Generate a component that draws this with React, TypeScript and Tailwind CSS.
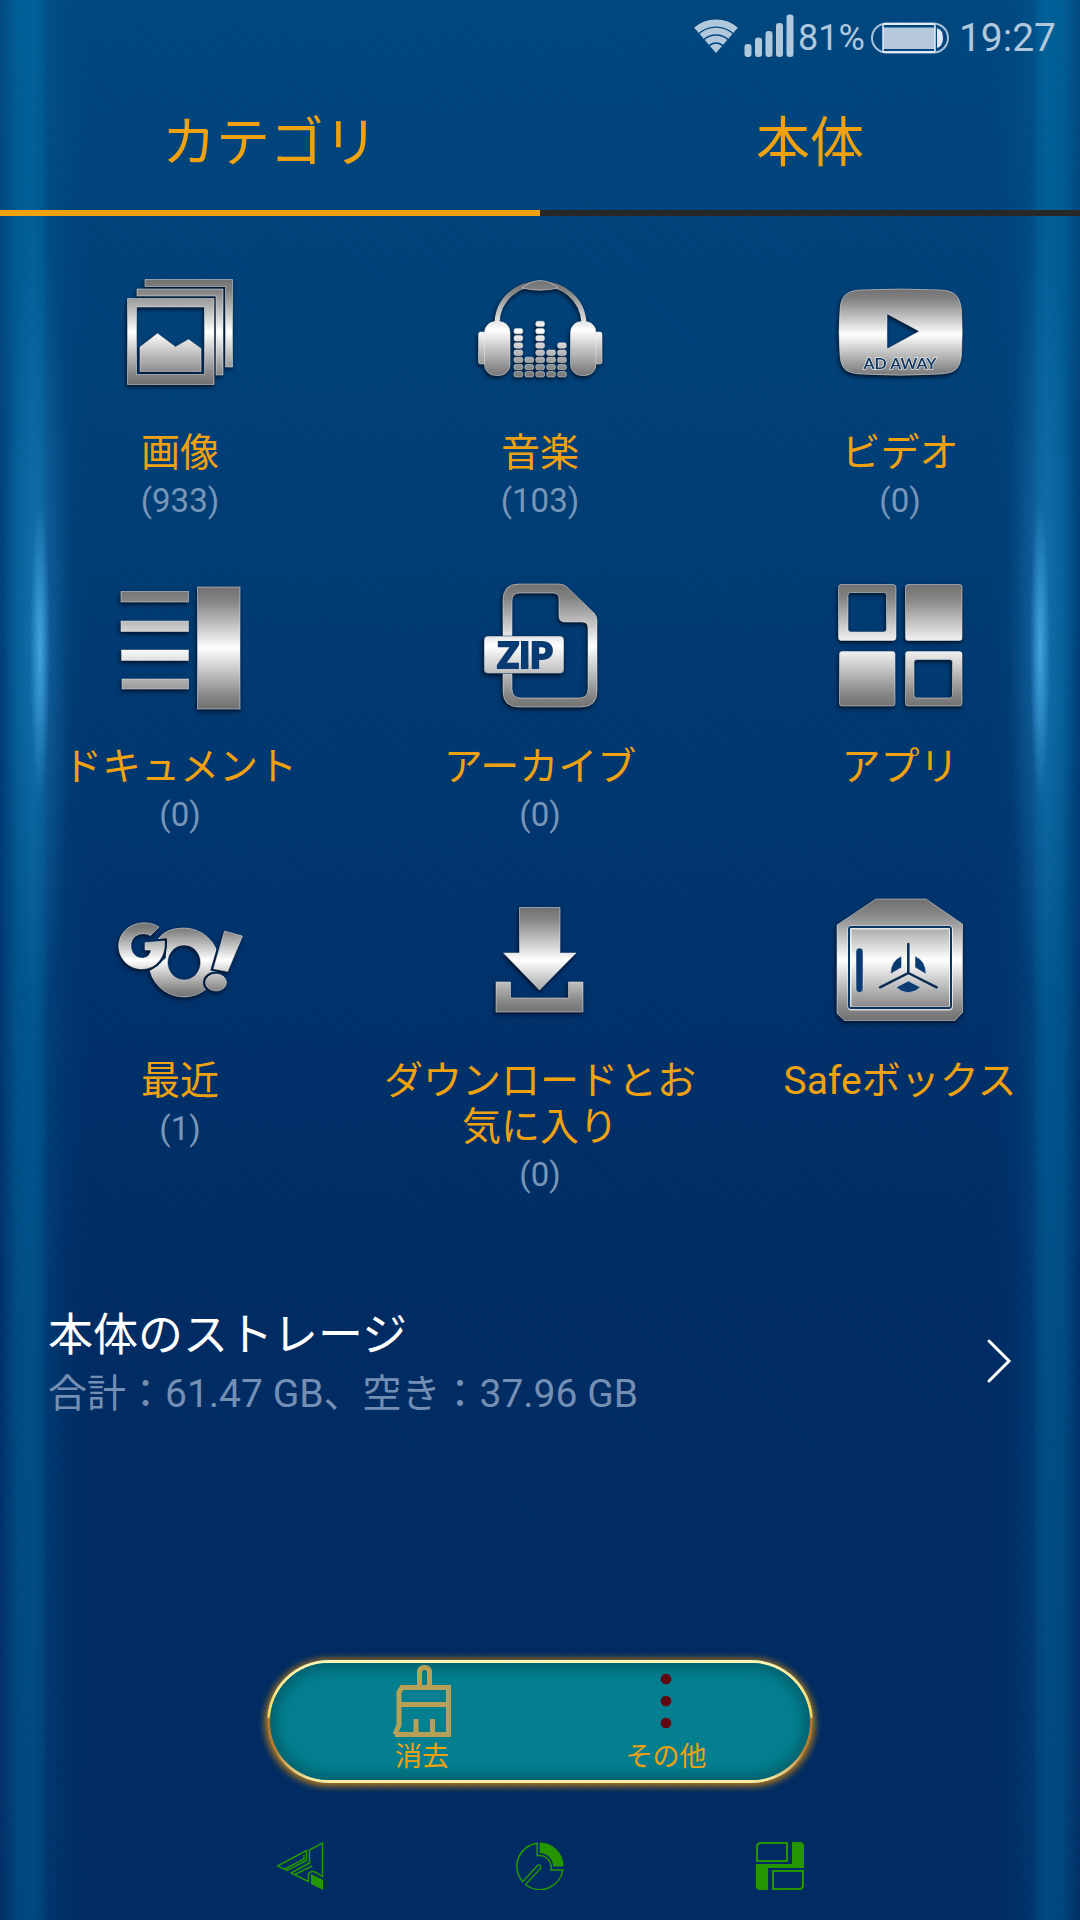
import { useState } from "react";
import type { ReactNode } from "react";

// Brushed metal icon, shaded grey -> white -> grey from top to bottom
const MetalIcon = ({ id, top, bottom, children }: { id: string; top: number; bottom: number; children: ReactNode }) => (
  <svg
    viewBox="0 0 144 144"
    aria-hidden="true"
    className="h-36 w-36 drop-shadow-[-1px_2px_2px_rgba(0,8,24,0.85)]"
    fill={`url(#${id})`}
    stroke="#ececec"
    strokeOpacity="0.5"
    strokeWidth="1"
  >
    <defs>
      <linearGradient id={id} gradientUnits="userSpaceOnUse" x1="0" x2="0" y1={top} y2={bottom}>
        <stop offset="0" stopColor="#707070" />
        <stop offset="0.12" stopColor="#858585" />
        <stop offset="0.5" stopColor="#ffffff" />
        <stop offset="0.9" stopColor="#858585" />
        <stop offset="1" stopColor="#707070" />
      </linearGradient>
    </defs>
    {children}
  </svg>
);

const ImagesIcon = () => (
  <MetalIcon id="metal-images" top={19} bottom={125}>
    <path d="M37 19.5H124.5V107H117.5V26.5H37z" />
    <path d="M29 29H115V115H108V36H29z" />
    <path fillRule="evenodd" d="M19.5 38.5H106V124.5H19.5zM28.5 47V114.5H96.5V47z" />
    <path d="M32 87L49.5 73.5L67.5 87L80.5 79.5L93 88.5V111.5H32z" />
  </MetalIcon>
);

const equalizer = [7, 3, 8, 4, 5];

const MusicIcon = () => (
  <MetalIcon id="metal-music" top={20} bottom={120}>
    <path d="M29 63C30 38 50 23.5 72 23.5S114.5 38 116 63" fill="none" stroke="url(#metal-music)" strokeOpacity="1" strokeWidth="5" />
    <path d="M54 28Q63 20.5 72.3 20.5T90 28Q72 32.5 54 28z" />
    <rect x="10.5" y="72" width="7" height="32" rx="2" />
    <rect x="127" y="72" width="7" height="32" rx="2" />
    <rect x="16.5" y="61.5" width="25.5" height="54" rx="11" />
    <rect x="102.5" y="61.5" width="25.5" height="54" rx="11" />
    {equalizer.map((count, col) =>
      Array.from({ length: count }, (_, row) => (
        <rect key={`${col}-${row}`} x={46 + col * 10.9} y={111.6 - row * 7.2} width="8.7" height="5.4" rx="2" />
      ))
    )}
  </MetalIcon>
);

const VideoIcon = () => (
  <MetalIcon id="metal-video" top={29} bottom={120}>
    <path
      fillRule="evenodd"
      d="M12 50C13 36 18 31 32 30Q72 28 113 30C127 31 132 36 133.5 50Q135 72 133.5 95C132 109 127 113 113 114Q72 116.5 32 114C18 113 13 109 12 95Q10 72 12 50zM59 53.7V89L91.3 71.3z"
    />
    <text
      x="72"
      y="109"
      textAnchor="middle"
      fill="#0b3563"
      stroke="#f4f4f4"
      strokeOpacity="0.8"
      strokeWidth="1.5"
      paintOrder="stroke"
      className="font-['Lato',sans-serif] text-[16px] font-semibold"
    >
      AD AWAY
    </text>
  </MetalIcon>
);

const DocumentIcon = () => (
  <MetalIcon id="metal-doc" top={13} bottom={135}>
    <rect x="13" y="17.5" width="67.5" height="10.5" />
    <rect x="13" y="47" width="67.5" height="10.5" />
    <rect x="13.5" y="76" width="67" height="10.5" />
    <rect x="14" y="105" width="66.5" height="10" />
    <rect x="89.5" y="13" width="42.5" height="122" />
  </MetalIcon>
);

const ArchiveIcon = () => (
  <MetalIcon id="metal-zip" top={10} bottom={134}>
    <path
      fillRule="evenodd"
      d="M51 10H90Q96 10 99 13L126 39Q129 42 129 47V117Q129 133 113 133H51Q35 133 35 117V26Q35 10 51 10zM52 19Q44 19 44 27V115Q44 124 53 124H111Q120 124 120 115V54Q120 48 114 48H97Q91 48 91 42V25Q91 19 85 19z"
    />
    <rect x="16" y="62" width="80" height="37.5" rx="4" stroke="#0b3563" strokeOpacity="0.5" />
    <text
      x="57"
      y="94"
      textAnchor="middle"
      fill="#083a73"
      stroke="#083a73"
      strokeOpacity="1"
      strokeWidth="2"
      className="font-['Lato',sans-serif] text-[36px] font-black"
    >
      ZIP
    </text>
  </MetalIcon>
);

const AppsIcon = () => (
  <MetalIcon id="metal-apps" top={10} bottom={133}>
    <path
      fillRule="evenodd"
      d="M13 10.5H65Q68 10.5 68 13.5V63.5Q68 66.5 65 66.5H13Q10.5 66.5 10.5 63.5V13.5Q10.5 10.5 13 10.5zM23 18.5Q20 18.5 20 21.5V55Q20 58 23 58H55.5Q58.5 58 58.5 55V21.5Q58.5 18.5 55.5 18.5z"
    />
    <rect x="77.5" y="10.5" width="56.5" height="56" rx="2.5" />
    <rect x="11.5" y="77.5" width="55.5" height="54.5" rx="2.5" />
    <path
      fillRule="evenodd"
      d="M80 77.5H131.5Q134 77.5 134 80V129.5Q134 132 131.5 132H80Q77.5 132 77.5 129.5V80Q77.5 77.5 80 77.5zM89 85.5Q86 85.5 86 88.5V121Q86 124 89 124H121.5Q124.5 124 124.5 121V88.5Q124.5 85.5 121.5 85.5z"
    />
  </MetalIcon>
);

const letterG =
  "M51 39C45 35 38 34.5 33 35C19 36.5 10.5 47 10.7 58.5C11 71 21 81 34 81C49 80.5 57.5 69 56.5 53L37 54.7V62H43C42 68 38 70.5 33 70C26 69 22.5 63 23 56C24 47 34 43 42.5 47.5z";
const exclamation = "M116.5 43L134.5 48L119.7 83.5L105.5 80.7z";

const RecentIcon = () => (
  <MetalIcon id="metal-go" top={34} bottom={110}>
    <mask id="go-gap" maskUnits="userSpaceOnUse" x="0" y="0" width="144" height="144">
      <rect width="144" height="144" fill="#ffffff" />
      <g fill="#000000" stroke="#000000" strokeOpacity="1" strokeWidth="5">
        <path d={letterG} />
        <path d={exclamation} />
        <ellipse cx="108" cy="94.5" rx="10.5" ry="8.5" />
      </g>
    </mask>
    <path
      mask="url(#go-gap)"
      fillRule="evenodd"
      d="M50 51Q58 40 75.5 40A35 34.5 0 1 1 42 83L58 70L58 52zM76 57A16.5 17.5 0 1 0 76.1 57z"
    />
    <path d={letterG} />
    <path d={exclamation} />
    <ellipse cx="108" cy="94.5" rx="10.5" ry="8.5" />
  </MetalIcon>
);

const DownloadIcon = () => (
  <MetalIcon id="metal-download" top={19} bottom={125}>
    <path d="M51.5 19.5H92V65H108L71.5 102L35.5 65H51.5z" />
    <path d="M28 94H42.5V110H100.5V94H115V124H28z" />
  </MetalIcon>
);

const SafeIcon = () => (
  <MetalIcon id="metal-safe" top={11} bottom={133}>
    <path d="M48 11H98L134.5 36V124.5L127 132.5H16.5L9 125.5V37z" />
    <rect x="21.5" y="39.5" width="101.5" height="81" rx="2" fill="none" stroke="#ffffff" strokeOpacity="0.7" strokeWidth="4" />
    <rect x="21" y="39" width="102" height="81" rx="2" fill="none" stroke="#0b3563" strokeOpacity="1" strokeWidth="2" />
    <g fill="#0a3a72">
      <rect x="28" y="60" width="7" height="44.5" rx="3.5" />
      <path d="M62.5 86Q62.5 73 73.5 68V79.5z" />
      <path d="M98 86Q98 73 87 68V79.5z" />
      <path d="M68 99.3L80.3 93L92.5 99.3Q80.3 110 68 99.3z" />
    </g>
    <path
      d="M80.3 56V85L52 99.3M80.3 85L108.7 99.3"
      fill="none"
      stroke="#0b2c52"
      strokeOpacity="1"
      strokeWidth="2.5"
      strokeLinecap="round"
    />
  </MetalIcon>
);

const categories = [
  { label: "画像", count: 933, icon: <ImagesIcon /> },
  { label: "音楽", count: 103, icon: <MusicIcon /> },
  { label: "ビデオ", count: 0, icon: <VideoIcon /> },
  { label: "ドキュメント", count: 0, icon: <DocumentIcon /> },
  { label: "アーカイブ", count: 0, icon: <ArchiveIcon /> },
  { label: "アプリ", icon: <AppsIcon /> },
  { label: "最近", count: 1, icon: <RecentIcon /> },
  { label: "ダウンロードとお気に入り", count: 0, icon: <DownloadIcon /> },
  { label: "Safeボックス", icon: <SafeIcon /> },
];

const StatusBar = () => (
  <div className="flex h-[72px] items-center justify-end pr-6 text-[#b1c7dc]">
    <svg viewBox="0 0 44 34" className="h-[34px] w-11" aria-hidden="true">
      <clipPath id="wifi-fan">
        <path d="M22 34L-4 4V-4H48V4z" />
      </clipPath>
      <g clipPath="url(#wifi-fan)" fill="none" stroke="currentColor">
        <circle cx="22" cy="34" r="30" strokeWidth="7" />
        <circle cx="22" cy="34" r="22" strokeWidth="6.3" />
        <circle cx="22" cy="34" r="14" strokeWidth="6.6" />
        <circle cx="22" cy="34" r="4.7" strokeWidth="9.2" />
      </g>
    </svg>
    <svg viewBox="0 0 50 44" className="ml-1.5 h-11 w-[50px]" fill="currentColor" aria-hidden="true">
      <rect x="0.5" y="30" width="7" height="13" rx="3" />
      <rect x="11" y="23.5" width="7" height="19.5" rx="3" />
      <rect x="21.5" y="17" width="7" height="26" rx="3" />
      <rect x="32" y="9" width="7" height="34" rx="3" />
      <rect x="42.5" y="0.5" width="7" height="42.5" rx="3" />
    </svg>
    <span className="ml-1 pt-1 text-[36px] leading-none">81%</span>
    <svg viewBox="0 0 78 32" className="mt-1 ml-1.5 h-8 w-[78px]" aria-hidden="true">
      <rect x="1" y="1.5" width="76" height="29" rx="14.5" fill="none" stroke="#a9c1d9" strokeWidth="2" />
      <path d="M12 2H62M12 30H62" stroke="#dfe9f3" strokeWidth="2" />
      <rect x="12" y="5.5" width="52" height="21.5" fill="#b5c8dc" />
      <rect x="12" y="2" width="52" height="28" rx="2" fill="none" stroke="#e3ecf5" strokeWidth="1.5" />
      <path d="M66 6Q72 8 72 16T66 26z" fill="#dfe8f2" />
    </svg>
    <span className="ml-2.5 pt-1 text-[39px] leading-none">19:27</span>
  </div>
);

const tabs = ["カテゴリ", "本体"];

const Tabs = () => {
  const [active, setActive] = useState(0);
  return (
    <div role="tablist" className="grid grid-cols-2">
      {tabs.map((tab, index) => (
        <button
          key={tab}
          type="button"
          role="tab"
          aria-selected={active === index}
          onClick={() => setActive(index)}
          className={`h-36 border-b-6 pt-1.5 text-[54px] leading-none text-[#f0a10f] ${active === index ? "border-[#f0a10f]" : "border-[#282828]"}`}
        >
          {tab}
        </button>
      ))}
    </div>
  );
};

const ActionBar = () => (
  <div className="mx-auto w-[546px] rounded-full bg-[linear-gradient(#fff6b8_0%,#f3d35c_46%,#a8752a_48%,#b98232_75%,#fff0a6_100%)] p-[3px] shadow-[0_1px_7px_2px_#b87a14]">
    <div className="grid h-[117px] grid-cols-2 rounded-full bg-[#037f90] pr-[22px] pl-[30px] shadow-[inset_0_0_12px_7px_#02636f]">
      <button type="button" className="flex flex-col items-center text-[27px] leading-[34px] text-[#f0a10f]">
        <svg viewBox="0 0 72 77" className="h-[77px] w-[72px]" fill="none" stroke="#b9a057" strokeWidth="5" aria-hidden="true">
          <path d="M9 71.5L13 62V29L16 24.5H62.5V71.5H9M13 41.5H62" />
          <path d="M33.5 27V10Q33.5 4.5 38.5 4.5T43.5 10V27M30 72V56M46.5 72V56" />
        </svg>
        消去
      </button>
      <button type="button" className="flex flex-col items-center text-[27px] leading-[34px] text-[#f0a10f]">
        <svg viewBox="0 0 72 77" className="h-[77px] w-[72px]" fill="#620710" aria-hidden="true">
          <circle cx="36" cy="16" r="5.3" />
          <circle cx="36" cy="38" r="5.3" />
          <circle cx="36" cy="60" r="5.3" />
        </svg>
        その他
      </button>
    </div>
  </div>
);

const NavBar = () => (
  <nav className="mx-auto grid h-[108px] w-2/3 grid-cols-3 text-[#259600]">
    <button type="button" aria-label="戻る" className="flex items-center justify-center">
      <svg viewBox="0 0 48 48" className="h-12 w-12" fill="none" stroke="currentColor" strokeWidth="1.5">
        <path d="M1.5 24L30.5 8.500V18.500L11 28.500z" />
        <path d="M28 13V17L8 27.500" />
        <path d="M33.500 8L46.500 1V34.500L38 29.500Q33 29 32.500 33V39.500L15 31L33.500 21z" />
        <path d="M36 24L19 32.500" />
        <path d="M35 32L47 38V48L35 42z" fill="currentColor" stroke="none" />
      </svg>
    </button>
    <button type="button" aria-label="ホーム" className="flex items-center justify-center">
      <svg viewBox="0 0 49 49" className="h-12 w-12" fill="none" stroke="currentColor" strokeWidth="1.5">
        <path d="M21.6 1.3V14A12 12 0 0 1 35.6 28.5H47.8A23.7 23.7 0 0 1 9.7 43.5L25 27Q26 23 22.5 23.5L6.8 40.5A23.7 23.7 0 0 1 21.6 1.3z" />
        <path d="M24.2 0.5A24 24 0 0 1 48.5 25H38A14 14 0 0 0 24.2 11.3z" fill="currentColor" stroke="none" />
      </svg>
    </button>
    <button type="button" aria-label="履歴" className="flex items-center justify-center">
      <svg viewBox="0 0 48 48" className="h-12 w-12" fill="none" stroke="currentColor" strokeWidth="2">
        <path d="M1 19V5Q1 1 5 1H31V19z" />
        <path d="M36 0H44Q48 0 48 4V26H12V48H4Q0 48 0 44V22H36z" fill="currentColor" stroke="none" />
        <path d="M17 29H47V43Q47 47 43 47H17z" />
      </svg>
    </button>
  </nav>
);

// Soft vertical light along one side of the wallpaper
const EdgeGlow = () => (
  <>
    <div className="absolute inset-0 bg-[linear-gradient(90deg,rgba(0,112,168,0.1)_0px,rgba(0,120,176,0.5)_18px,rgba(0,120,176,0.55)_34px,rgba(0,116,172,0.42)_43px,rgba(0,112,168,0.24)_48px,rgba(0,112,168,0.08)_66px,rgba(0,112,168,0)_90px)]" />
    <div className="absolute inset-0 bg-[radial-gradient(34px_400px_at_38px_620px,rgba(50,150,215,0.4),rgba(50,150,215,0))]" />
    <div className="absolute inset-0 bg-[radial-gradient(10px_150px_at_40px_650px,rgba(85,185,245,0.75),rgba(85,185,245,0))]" />
  </>
);

const App = () => {
  return (
    <div className="relative isolate flex min-h-screen flex-col bg-[linear-gradient(#00477f_0%,#004078_20%,#003a72_34%,#00316b_52%,#002b63_68%,#002b62_100%)] font-['Roboto','Noto_Sans_CJK_JP',sans-serif]">
      <div aria-hidden="true" className="pointer-events-none absolute inset-0 -z-10 overflow-hidden">
        <div className="absolute inset-y-0 left-0 w-24 mask-[linear-gradient(#000_50%,rgba(0,0,0,0.7))]">
          <EdgeGlow />
        </div>
        <div className="absolute inset-y-0 right-0 w-24 -scale-x-100 mask-[linear-gradient(#000_50%,rgba(0,0,0,0.7))]">
          <EdgeGlow />
        </div>
        <div className="absolute inset-0 bg-[repeating-linear-gradient(45deg,rgba(0,10,40,0.04)_0px,rgba(0,10,40,0.04)_1px,rgba(40,120,170,0.03)_2px,rgba(40,120,170,0.03)_4px)]" />
      </div>

      <StatusBar />
      <Tabs />

      <main className="flex flex-1 flex-col">
        <div className="grid grid-cols-3 gap-y-12 pt-11">
          {categories.map((item) => (
            <button key={item.label} type="button" className="flex flex-col items-center px-5">
              {item.icon}
              <span className="mt-[26px] text-[39px] leading-[46px] text-[#f0a10f]">{item.label}</span>
              {item.count !== undefined && <span className="text-[33px] leading-[50px] text-[#7896b8]">({item.count})</span>}
            </button>
          ))}
        </div>

        <button type="button" className="mt-[107px] flex items-center justify-between pr-[66px] pl-12 text-left">
          <span className="flex flex-col">
            <span className="text-[45px] leading-[58px] text-white">本体のストレージ</span>
            <span className="text-[39px] leading-[58px] text-[#748fb3]">合計：61.47 GB、空き：37.96 GB</span>
          </span>
          <svg viewBox="0 0 28 46" className="mb-2 h-[46px] w-7" fill="none" stroke="#ffffff" strokeWidth="3" strokeLinecap="round" aria-hidden="true">
            <path d="M3 3L23 23L3 43" />
          </svg>
        </button>
      </main>

      <div className="pb-[29px]">
        <ActionBar />
      </div>
      <NavBar />
    </div>
  );
};

export default App;
